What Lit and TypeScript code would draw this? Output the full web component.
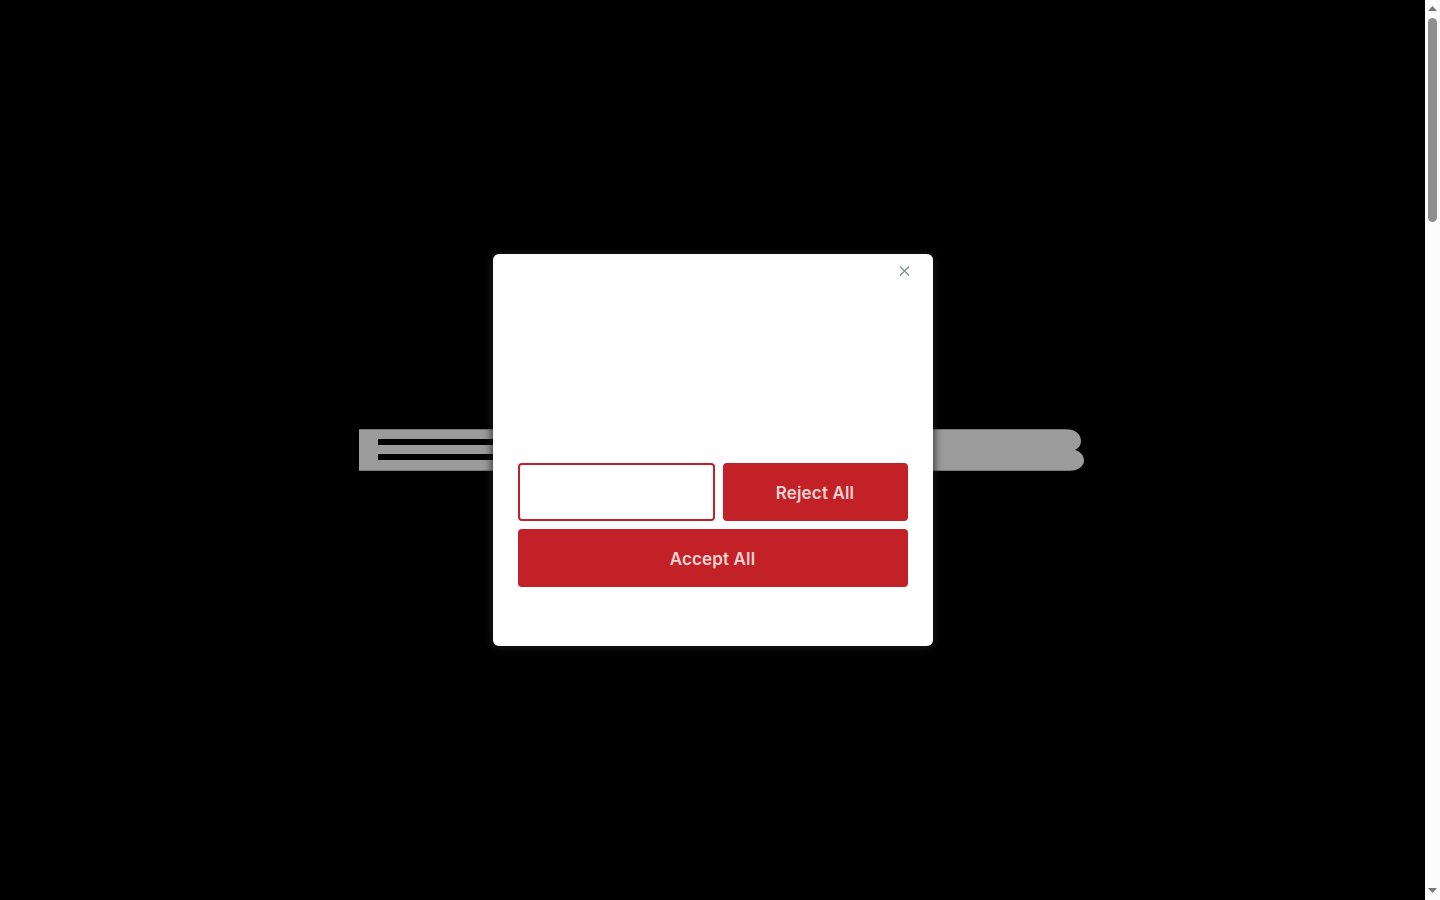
import { LitElement, html, css } from "lit";
import { customElement } from "lit/decorators.js";

@customElement("app-root")
export class AppRoot extends LitElement {
  static styles = css`
    :host { display: flex; width: 100%; height: 100vh; overflow: hidden; background: #000; font-family: Inter, "Liberation Sans", sans-serif; }
    .stage { flex: 1; min-width: 0; display: grid; place-items: center; background: #000; }
    .stage > * { grid-area: 1 / 1; }
    .logo { display: block; width: 726px; height: 42px; margin-left: 18px; }
    .modal { position: relative; box-sizing: border-box; width: 440px; height: 392px; background: #fff; border-radius: 6px; box-shadow: 0 0 9px 1px rgba(32, 32, 32, 0.9); padding: 0 25px 59px; display: flex; flex-direction: column; justify-content: flex-end; }
    .close { position: absolute; top: 12px; right: 23px; width: 11px; height: 11px; padding: 0; border: 0; background: none; color: #7b8a93; display: block; }
    .close svg { display: block; width: 11px; height: 11px; }
    .actions { display: grid; grid-template-columns: 197px 185px; gap: 8px; }
    button.btn { box-sizing: border-box; height: 58px; padding: 2px 0 0; border-radius: 4px; font: 600 17px/1 Inter, "Liberation Sans", sans-serif; letter-spacing: 0.15px; }
    .outline { background: #fff; border: 2px solid #c12127; }
    .solid { background: #c12127; border: 0; color: #f9d2d2; }
    .wide { grid-column: 1 / -1; }
    .bar { flex: none; box-sizing: border-box; width: 15px; height: 100vh; background: #fcfcfc; display: flex; flex-direction: column; align-items: center; }
    .arrow { display: block; width: 9px; height: 5px; flex: none; margin-top: 6px; fill: #777; }
    .thumb { flex: none; width: 9px; height: 204px; margin-top: 7px; border-radius: 5px; background: #8f8f8f; }
    .fill { flex: 1; }
    .arrow.down { margin: 0 0 7px; }
  `;

  render() {
    return html`
      <main class="stage">
        <svg class="logo" viewBox="0 0 726 42" aria-hidden="true">
          <path fill="#9b9b9b" fill-rule="evenodd" d="M0 0.300H707C716 0.300 722 5 722 12C722 16 720 19 716 21C722 23 725 27 725 31.500C725 37.500 719 41.700 711 41.700H0ZM19 10V16H300V10ZM19 25V31H300V25Z"/>
        </svg>
        <section class="modal" role="dialog" aria-modal="true">
          <button class="close" aria-label="Close">
            <svg viewBox="0 0 11 11" fill="none" stroke="currentColor" stroke-width="1.200"><path d="M1 0.500L10 9.500M10 0.500L1 9.500"/></svg>
          </button>
          <div class="actions">
            <button class="btn outline"></button>
            <button class="btn solid">Reject All</button>
            <button class="btn solid wide">Accept All</button>
          </div>
        </section>
      </main>
      <div class="bar" aria-hidden="true">
        <svg class="arrow" viewBox="0 0 9 5"><path d="M4.500 0L9 5H0Z"/></svg>
        <div class="thumb"></div>
        <div class="fill"></div>
        <svg class="arrow down" viewBox="0 0 9 5"><path d="M0 0H9L4.500 5Z"/></svg>
      </div>
    `;
  }
}
